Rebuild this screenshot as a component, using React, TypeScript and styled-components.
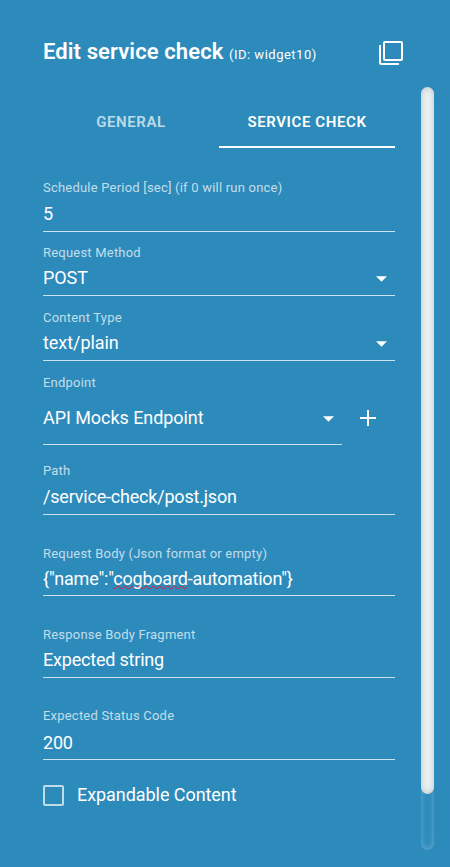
import React from "react";
import styled, { createGlobalStyle } from "styled-components";

const GlobalStyle = createGlobalStyle`
  * { box-sizing: border-box; }
  html, body { margin: 0; background: #2d8bbb; }
  body { font-family: Roboto, "Liberation Sans", sans-serif; color: #fff; overflow: hidden; }
`;

const Dialog = styled.main`
  display: grid;
  grid-template-columns: 352px 13px;
  column-gap: 26px;
  width: 450px;
  height: 867px;
  padding-left: 43px;
  background: #2d8bbb;
`;

const Content = styled.div`
  display: flex;
  flex-direction: column;
`;

const Header = styled.header`
  display: flex;
  align-items: center;
  height: 87px;
  width: 361px;
  padding-top: 19px;
`;

const Title = styled.h1`
  margin: 0 auto 0 0;
  font-size: 22px;
  line-height: 30px;
  font-weight: 600;
  letter-spacing: 0.1px;
  white-space: nowrap;
`;

const WidgetId = styled.small`
  font-size: 13px;
  font-weight: 400;
  letter-spacing: 0.5px;
`;

const IconButton = styled.button`
  display: flex;
  padding: 0;
  border: 0;
  background: none;
  color: #fff;
`;

const Tabs = styled.nav`
  display: grid;
  grid-template-columns: 1fr 1fr;
  height: 61px;
`;

const Tab = styled.button<{ $active?: boolean }>`
  padding: 10px 0 0;
  border: 0;
  border-bottom: 2px solid ${(p) => (p.$active ? "#fff" : "transparent")};
  background: none;
  color: ${(p) => (p.$active ? "#fff" : "rgba(255,255,255,.7)")};
  font: 600 15px/20px Roboto, sans-serif;
  letter-spacing: 0.6px;
`;

const Form = styled.form`
  display: flex;
  flex-direction: column;
  padding-top: 32px;
`;

const Field = styled.div<{ $height: number; $after: number; $short?: boolean }>`
  display: flex;
  flex-direction: column;
  width: ${(p) => (p.$short ? 299 : 352)}px;
  height: ${(p) => p.$height}px;
  margin-bottom: ${(p) => p.$after}px;
  border-bottom: 1px solid rgba(255, 255, 255, 0.75);
`;

const Label = styled.label`
  font-size: 13px;
  line-height: 16px;
  letter-spacing: 0.21px;
  color: rgba(255, 255, 255, 0.72);
  white-space: nowrap;
`;

const Value = styled.div<{ $gap: number; $select?: boolean }>`
  display: flex;
  align-items: center;
  justify-content: space-between;
  height: 22px;
  margin-top: ${(p) => p.$gap}px;
  padding-right: 8px;
  font-size: 18px;
  line-height: 22px;
  letter-spacing: ${(p) => (p.$select ? -0.06 : -0.2)}px;
  white-space: pre;
`;

const Misspelled = styled.span`
  text-decoration: underline wavy #f0142f 1px;
  text-decoration-skip-ink: none;
  text-underline-offset: 0;
`;

const Caret = styled.svg`
  width: 11px;
  height: 6px;
  margin-top: 2px;
  fill: #fff;
`;

const EndpointRow = styled.div`
  display: flex;
  justify-content: space-between;
  width: 333px;
`;

const AddButton = styled(IconButton)`
  align-self: flex-start;
  margin-top: 35px;
`;

const CheckRow = styled.label`
  display: flex;
  align-items: center;
  height: 24px;
  gap: 13px;
  font-size: 18px;
  line-height: 24px;
  letter-spacing: -0.06px;
`;

const Checkbox = styled.span`
  width: 21px;
  height: 21px;
  margin-top: 1px;
  border: 2px solid rgba(255, 255, 255, 0.7);
  border-radius: 2px;
`;

const ScrollTrack = styled.div`
  height: 763px;
  margin-top: 87px;
  border-radius: 7px;
  box-shadow: inset 0 0 6px rgba(255, 255, 255, 0.3);
`;

const ScrollThumb = styled.div`
  height: 707px;
  border-radius: 7px;
  background: #e9f1f5;
  box-shadow: inset 0 0 6px rgba(0, 0, 0, 0.2);
`;

type FieldProps = {
  label: string;
  value: React.ReactNode;
  height: number;
  gap: number;
  after: number;
  select?: boolean;
  short?: boolean;
};

function FormField({ label, value, height, gap, after, select, short }: FieldProps) {
  return (
    <Field $height={height} $after={after} $short={short}>
      <Label>{label}</Label>
      <Value $gap={gap} $select={select}>
        <span>{value}</span>
        {select && (
          <Caret viewBox="0 0 11 6">
            <path d="M0 0.3h11L5.5 5.8z" />
          </Caret>
        )}
      </Value>
    </Field>
  );
}

export default function App() {
  return (
    <>
      <GlobalStyle />
      <Dialog>
        <Content>
          <Header>
            <Title>
              Edit service check <WidgetId>(ID: widget10)</WidgetId>
            </Title>
            <IconButton aria-label="Copy">
              <svg width="26" height="26" viewBox="0 0 26 26" fill="none" stroke="#fff" strokeWidth="2">
                <rect x="6" y="2" width="18" height="18" rx="1" />
                <path d="M2 5V22.5q0 1.5 1.5 1.5H21" />
              </svg>
            </IconButton>
          </Header>
          <Tabs>
            <Tab>GENERAL</Tab>
            <Tab $active>SERVICE CHECK</Tab>
          </Tabs>
          <Form>
            <FormField label="Schedule Period [sec] (if 0 will run once)" value="5" height={52} gap={7} after={13} />
            <FormField label="Request Method" value="POST" height={51} gap={6} after={14} select />
            <FormField label="Content Type" value="text/plain" height={51} gap={6} after={14} select />
            <EndpointRow>
              <FormField label="Endpoint" value="API Mocks Endpoint" height={70} gap={16} after={18} select short />
              <AddButton type="button" aria-label="Add endpoint">
                <svg width="16" height="16" viewBox="0 0 16 16" stroke="#fff" strokeWidth="2">
                  <path d="M8 0v16M0 8h16" />
                </svg>
              </AddButton>
            </EndpointRow>
            <FormField label="Path" value="/service-check/post.json" height={52} gap={7} after={31} />
            <FormField
              label="Request Body (Json format or empty)"
              value={<>{'{"name":"'}<Misspelled>cogboard</Misspelled>{'-automation"}'}</>}
              height={50}
              gap={6}
              after={31}
            />
            <FormField label="Response Body Fragment" value="Expected string" height={51} gap={6} after={30} />
            <FormField label="Expected Status Code" value="200" height={52} gap={8} after={23} />
            <CheckRow>
              <Checkbox />
              Expandable Content
            </CheckRow>
          </Form>
        </Content>
        <ScrollTrack>
          <ScrollThumb />
        </ScrollTrack>
      </Dialog>
    </>
  );
}
